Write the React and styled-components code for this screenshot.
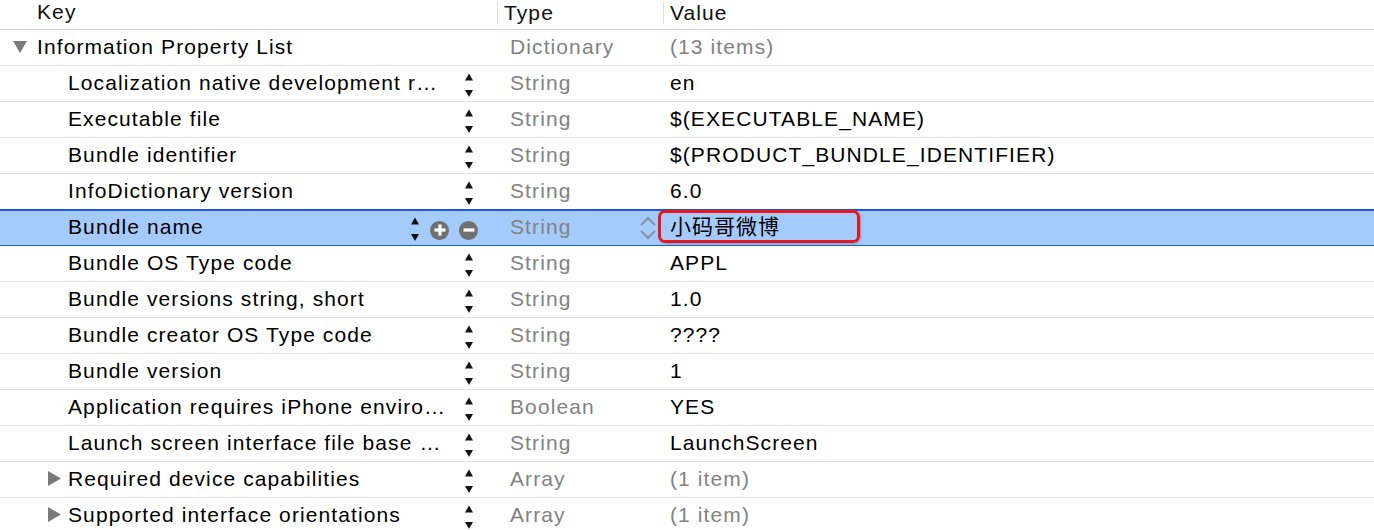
import React from 'react';
import styled, { createGlobalStyle, css } from 'styled-components';

const GlobalStyle = createGlobalStyle`
  html, body {
    margin: 0;
    padding: 0;
    background: #ffffff;
  }
  body {
    font-family: "Liberation Sans", Arial, "Noto Sans CJK SC", sans-serif;
    -webkit-font-smoothing: antialiased;
  }
`;

const Table = styled.div`
  width: 1374px;
  height: 530px;
  overflow: hidden;
  background: #fff;
  font-size: 21px;
  letter-spacing: 1.1px;
  color: #111;
`;

const HeaderRow = styled.div`
  display: grid;
  grid-template-columns: 497px 166px 1fr;
  align-items: start;
  height: 30px;
  box-sizing: border-box;
  border-bottom: 1px solid #d2d2d2;
`;

const HeaderCell = styled.div`
  height: 22px;
  line-height: 22px;
  margin-top: 1px;
  padding-left: ${p => p.$indent}px;
  ${p => p.$divider && css`
    border-left: 1px solid #dcdcdc;
    margin-top: 2px;
  `}
`;

const Row = styled.div`
  display: grid;
  grid-template-columns: 497px 166px 1fr;
  grid-template-rows: 33px;
  height: 36px;
  box-sizing: border-box;
  padding-bottom: 2px;
  border-bottom: 1px solid #e0e0e0;
  line-height: 33px;
  ${p => p.$selected && css`
    background: #a5cbfd;
    border-bottom-color: #1c5bd3;
    box-shadow: 0 -1px 0 #1c5bd3, inset 0 1px 0 #1c5bd3;
  `}
`;

const KeyCell = styled.div`
  display: flex;
  align-items: center;
  min-width: 0;
  padding-left: ${p => p.$indent}px;
  padding-right: ${p => p.$gutter}px;
`;

const Disclosure = styled.span`
  display: inline-flex;
  justify-content: flex-start;
  box-sizing: border-box;
  width: 24px;
  margin-left: -24px;
  padding-left: ${p => p.$shift}px;
  flex: none;
`;

const Label = styled.span`
  flex: 1;
  min-width: 0;
  white-space: nowrap;
  overflow: hidden;
  text-overflow: ellipsis;
  color: #000;
`;

const Controls = styled.span`
  display: flex;
  align-items: center;
  flex: none;
  gap: 10px;
  margin-left: 17px;
`;

const Stepper = styled.svg`
  display: block;
  margin-top: 6px;
  flex: none;
`;

const RoundButton = styled.span`
  width: 19px;
  height: 19px;
  border-radius: 50%;
  background: #707070;
  display: inline-flex;
  align-items: center;
  justify-content: center;
  margin-top: 7px;
  flex: none;
`;

const TypeCell = styled.div`
  display: flex;
  align-items: center;
  padding-left: 13px;
  padding-right: 6px;
  color: #828282;
`;

const TypeText = styled.span`
  flex: 1;
`;

const ChevronBox = styled.svg`
  display: block;
  margin-top: 3px;
  flex: none;
`;

const ValueCell = styled.div`
  display: flex;
  align-items: center;
  padding-left: 7px;
  color: ${p => (p.$muted ? '#828282' : '#000')};
  white-space: nowrap;
`;

const EditField = styled.span`
  display: inline-flex;
  align-items: center;
  box-sizing: border-box;
  width: 202px;
  height: 33px;
  margin-left: -12px;
  padding-left: 9px;
  border: 3px solid #e8161e;
  border-radius: 7px;
  box-shadow: 1px 1px 2px rgba(0, 0, 0, 0.25);
  font-family: "Liberation Sans", "Noto Sans CJK SC", sans-serif;
  letter-spacing: 1px;
  line-height: 25px;
  color: #000;
`;

const TriangleDown = () => (
  <svg width="14" height="12" viewBox="0 0 14 12">
    <polygon points="0,0 14,0 7,12" fill="#7a7a7a" />
  </svg>
);

const TriangleRight = () => (
  <svg width="13" height="15" viewBox="0 0 13 15">
    <polygon points="0,0 13,7.5 0,15" fill="#7a7a7a" />
  </svg>
);

const UpDown = () => (
  <Stepper width="10" height="25" viewBox="0 0 10 25">
    <polygon points="1,7.5 9,7.5 5,0.5" fill="#111" />
    <polygon points="1,17 9,17 5,24" fill="#111" />
  </Stepper>
);

const Chevrons = () => (
  <ChevronBox width="18" height="26" viewBox="0 0 18 26">
    <polyline points="2,10 9,3 16,10" fill="none" stroke="#8494a8" strokeWidth="2.2" />
    <polyline points="2,16 9,23 16,16" fill="none" stroke="#8494a8" strokeWidth="2.2" />
  </ChevronBox>
);

const PlusIcon = () => (
  <RoundButton>
    <svg width="12" height="12" viewBox="0 0 12 12">
      <rect x="4.4" y="0.5" width="3.2" height="11" fill="#fff" />
      <rect x="0.5" y="4.4" width="11" height="3.2" fill="#fff" />
    </svg>
  </RoundButton>
);

const MinusIcon = () => (
  <RoundButton>
    <svg width="12" height="12" viewBox="0 0 12 12">
      <rect x="0.5" y="4.4" width="11" height="3.2" fill="#fff" />
    </svg>
  </RoundButton>
);

const rows = [
  { key: 'Information Property List', type: 'Dictionary', value: '(13 items)', level: 0, open: true, muted: true },
  { key: 'Localization native development region', type: 'String', value: 'en', level: 1 },
  { key: 'Executable file', type: 'String', value: '$(EXECUTABLE_NAME)', level: 1 },
  { key: 'Bundle identifier', type: 'String', value: '$(PRODUCT_BUNDLE_IDENTIFIER)', level: 1 },
  { key: 'InfoDictionary version', type: 'String', value: '6.0', level: 1 },
  { key: 'Bundle name', type: 'String', value: '小码哥微博', level: 1, selected: true },
  { key: 'Bundle OS Type code', type: 'String', value: 'APPL', level: 1 },
  { key: 'Bundle versions string, short', type: 'String', value: '1.0', level: 1 },
  { key: 'Bundle creator OS Type code', type: 'String', value: '????', level: 1 },
  { key: 'Bundle version', type: 'String', value: '1', level: 1 },
  { key: 'Application requires iPhone environment', type: 'Boolean', value: 'YES', level: 1 },
  { key: 'Launch screen interface file base name', type: 'String', value: 'LaunchScreen', level: 1 },
  { key: 'Required device capabilities', type: 'Array', value: '(1 item)', level: 1, closed: true, muted: true },
  { key: 'Supported interface orientations', type: 'Array', value: '(1 item)', level: 1, closed: true, muted: true },
];

const PlistRow = ({ row }) => {
  const { key, type, value, level, open, closed, muted, selected } = row;
  return (
    <Row $selected={selected}>
      <KeyCell $indent={level === 0 ? 37 : 68} $gutter={selected ? 19 : 23}>
        {(open || closed) && (
          <Disclosure $shift={open ? 0 : 4}>
            {open ? <TriangleDown /> : <TriangleRight />}
          </Disclosure>
        )}
        <Label title={key}>{key}</Label>
        {level > 0 && (
          <Controls>
            <UpDown />
            {selected && <PlusIcon />}
            {selected && <MinusIcon />}
          </Controls>
        )}
      </KeyCell>
      <TypeCell>
        <TypeText>{type}</TypeText>
        {selected && <Chevrons />}
      </TypeCell>
      <ValueCell $muted={muted}>
        {selected ? <EditField>{value}</EditField> : value}
      </ValueCell>
    </Row>
  );
};

export default function App() {
  return (
    <>
      <GlobalStyle />
      <Table>
        <HeaderRow>
          <HeaderCell $indent={37}>Key</HeaderCell>
          <HeaderCell $indent={6} $divider>Type</HeaderCell>
          <HeaderCell $indent={6} $divider>Value</HeaderCell>
        </HeaderRow>
        {rows.map(row => (
          <PlistRow key={row.key} row={row} />
        ))}
      </Table>
    </>
  );
}
